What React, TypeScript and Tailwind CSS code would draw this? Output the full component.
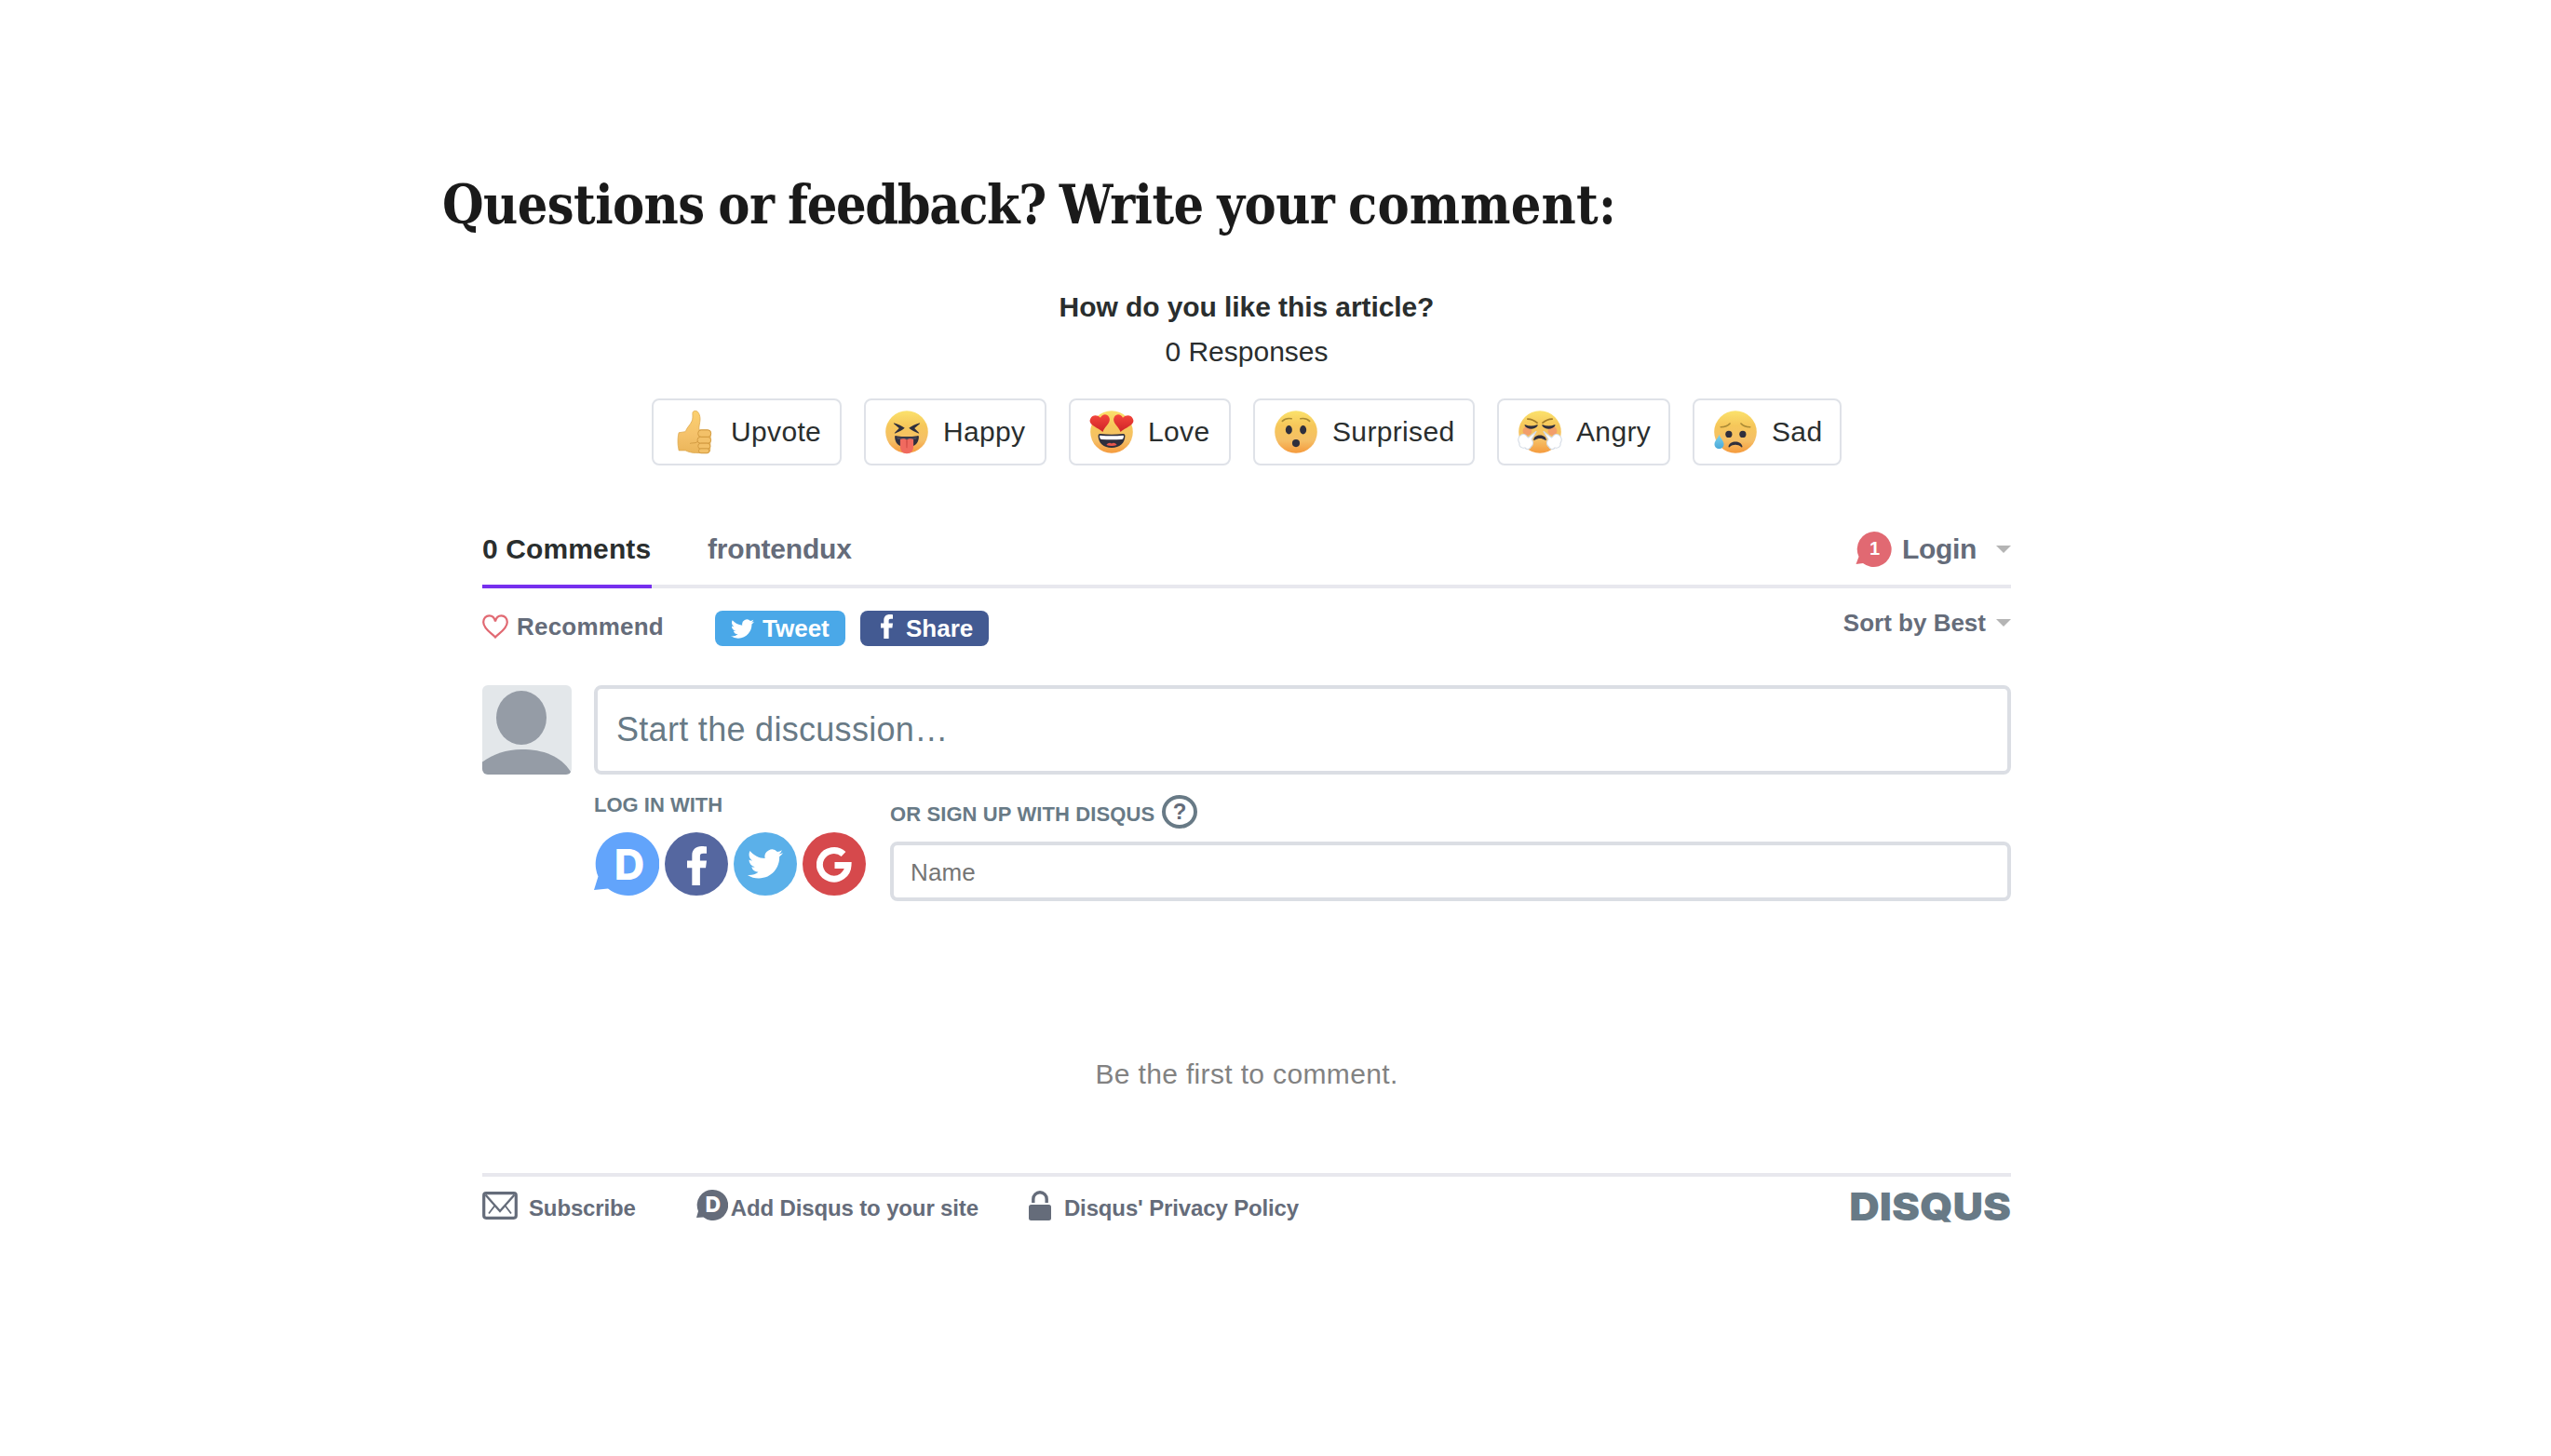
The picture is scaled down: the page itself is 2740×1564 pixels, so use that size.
import type { ReactNode } from "react";

function Face({ id, children }: { id: string; children: ReactNode }) {
  return (
    <svg viewBox="0 0 64 64" className="-ml-0.5 size-12 shrink-0">
      <defs>
        <linearGradient id={id} x1="0" y1="0" x2="0" y2="1">
          <stop offset="0" stopColor="#fbe26c" />
          <stop offset="0.35" stopColor="#f6c75a" />
          <stop offset="0.7" stopColor="#f5bf66" />
          <stop offset="1" stopColor="#f59a3c" />
        </linearGradient>
      </defs>
      <circle cx="32" cy="32" r="30.4" fill={`url(#${id})`} />
      {children}
    </svg>
  );
}

function Thumb() {
  return (
    <svg viewBox="0 0 64 64" className="-ml-0.5 size-12 shrink-0">
      <defs>
        <linearGradient id="thumb" x1="0" y1="0" x2="0" y2="1">
          <stop offset="0" stopColor="#fbd06f" />
          <stop offset="0.55" stopColor="#f5c26b" />
          <stop offset="1" stopColor="#eab55a" />
        </linearGradient>
      </defs>
      <g transform="translate(2 0)">
        <path
          d="M31 1.8c-3 0-4 1.8-3.8 4.4.2 4 .3 7.4-1.2 10.600C23.500 22.500 19 25.500 17 31.500L7.500 33C6 38 5.800 45 6.300 51l1.200 7.500H17c4 2.200 9 3.300 15 3.500l15 .2c4 0 5.600-2 5.300-5.200L53 34c0-3.500-1.500-4.900-5-4.900L36.500 29c-.5-5 1.300-10 1.500-14.500C38.200 8 35.500 1.800 31 1.800z"
          fill="url(#thumb)"
          stroke="#dca84e"
          strokeWidth="1"
        />
        <g fill="#f3c169" stroke="#d29a41" strokeWidth="1.300">
          <rect x="35" y="29.200" width="18.500" height="10" rx="4.500" />
          <rect x="34" y="39.200" width="19.500" height="9" rx="4.500" />
          <rect x="35" y="48.200" width="17.500" height="8" rx="4" />
          <rect x="36" y="55.800" width="15" height="6.500" rx="3.200" />
        </g>
        <path d="M23.500 48.500c5-1.500 8.500.5 11.500-3.500" fill="none" stroke="#d29a41" strokeWidth="1.300" />
      </g>
    </svg>
  );
}

function Happy() {
  return (
    <Face id="happy">
      <g fill="#2f2f3d">
        <path d="M14.200 19.300c5.500 1.700 11 4.300 14.800 7.100-3.800 3.200-8.600 5.900-13.700 7.600-.9.3-1.100-.5-.5-1.100l6.200-6.200-7.500-6.300c-.7-.6-.2-1.400.7-1.100z" />
        <path d="M49.800 19.300c-5.500 1.700-11 4.300-14.800 7.100 3.800 3.200 8.600 5.900 13.700 7.600.9.3 1.100-.5.500-1.100L43 26.700l7.500-6.300c.7-.6.200-1.400-.7-1.100z" />
        <path d="M14.800 39c0-1 .8-1.700 2-1.500 10.400 1.600 20 1.600 30.400 0 1.200-.2 2 .5 2 1.500C49 49 43 53.500 32 53.500S15 49 14.800 39z" />
      </g>
      <path d="M17.500 39c9.500 1.500 19.500 1.500 29 0-.3 3-1 3.600-2.500 3.700-8 .6-16 .6-24 0-1.500-.1-2.200-.7-2.500-3.700z" fill="#454557" />
      <path d="M22.500 42.500c3-1.300 7-1 9.500.8 2.500-1.800 6.500-2.100 9.500-.8V52c0 7-3.500 11-9.500 11s-9.500-4-9.500-11z" fill="#f06a5f" />
      <path d="M31.200 44h1.600l-.3 11h-1z" fill="#c8433f" />
    </Face>
  );
}

function Love() {
  return (
    <Face id="love">
      <defs>
        <linearGradient id="heart" x1="0" y1="0" x2="0" y2="1">
          <stop offset="0" stopColor="#f4473c" />
          <stop offset="1" stopColor="#cf2227" />
        </linearGradient>
      </defs>
      <path d="M28.200 10.500C25.500 5.500 18.500 5.800 16 11.800 11.500 7 4.500 7.500 1.800 12.500c-5 9 9 12.500 17.500 19.500 3-9 13-13.500 8.900-21.500z" fill="url(#heart)" />
      <path d="M35.800 10.500C38.500 5.500 45.500 5.800 48 11.800 52.500 7 59.500 7.500 62.200 12.500c5 9-9 12.500-17.500 19.500-3-9-13-13.500-8.900-21.500z" fill="url(#heart)" />
      <path d="M12.800 37.500c0-2 1.200-2.900 3-2.700 11 1 21.400 1 32.400 0 1.800-.2 3 .7 3 2.700C51 48 43.500 54.500 32 54.500S13 48 12.800 37.500z" fill="#2f2f3d" />
      <path d="M15.500 37c11 1 22 1 33 0 .6 0 .8.500.8 1.200-.3 3.300-1.300 4.300-3 4.400-9.500.7-19 .7-28.600 0-1.700-.1-2.700-1.100-3-4.400 0-.7.200-1.200.8-1.200z" fill="#fff" />
      <path d="M24.500 50.500c2-3 5.500-3.500 7.500-1.800 2-1.700 5.500-1.200 7.500 1.800-4.500 2-10.500 2-15 0z" fill="#e8564c" />
    </Face>
  );
}

function Surprised() {
  return (
    <Face id="surprised">
      <g fill="none" stroke="#a98a35" strokeWidth="2.200" strokeLinecap="round">
        <path d="M12.500 16.500c3-3.200 7.500-4.500 13-3.500" />
        <path d="M51.500 16.500c-3-3.200-7.500-4.500-13-3.500" />
      </g>
      <g fill="#2f2f3d">
        <ellipse cx="21.800" cy="29" rx="4.700" ry="6.200" />
        <ellipse cx="42.200" cy="29" rx="4.700" ry="6.200" />
        <ellipse cx="32" cy="48" rx="5.400" ry="5.500" />
      </g>
    </Face>
  );
}

function Angry() {
  return (
    <Face id="angry">
      <circle cx="14" cy="30.500" r="6.500" fill="#f08a70" opacity=".65" />
      <circle cx="50" cy="30.500" r="6.500" fill="#f08a70" opacity=".65" />
      <g fill="none" stroke="#a27c2b" strokeWidth="2.400" strokeLinecap="round">
        <path d="M14.500 13.500c5 .2 10 2.300 13.500 5.300" />
        <path d="M49.500 13.500c-5 .2-10 2.300-13.500 5.300" />
      </g>
      <g fill="#2f2f3d">
        <path d="M11 21.500c5.500 2.500 11.500 2.500 17 0 1 0 1.200.8.800 1.500-3.300 6-15.300 6-18.600 0-.4-.7-.2-1.500.8-1.500z" />
        <path d="M36 21.500c5.500 2.500 11.500 2.500 17 0 1 0 1.200.8.800 1.500-3.300 6-15.300 6-18.600 0-.4-.7-.2-1.500.8-1.500z" />
        <path d="M23 43c1-8.500 17-8.500 18 0 .1 1-.7 1.200-1.500.7-5-3.200-10-3.200-15 0-.8.500-1.600.3-1.500-.7z" />
      </g>
      <g fill="#fff" stroke="#d3dae4" strokeWidth="1.400">
        <path d="M3 38c3-4 8.500-3.500 10.500.5l2 1.500L27 31l-7 11.500c3 3.500 2.500 8.500-.7 10.500C18 57 13 58 10.500 54.500 6 56 1.500 52.500 2.800 48.500.5 45 .5 41 3 38z" />
        <path d="M61 38c-3-4-8.500-3.500-10.500.5l-2 1.500L37 31l7 11.500c-3 3.500-2.500 8.500.7 10.500C46 57 51 58 53.500 54.500 58 56 62.500 52.500 61.200 48.500 63.500 45 63.500 41 61 38z" />
      </g>
    </Face>
  );
}

function Sad() {
  return (
    <Face id="sad">
      <defs>
        <linearGradient id="tear" x1="0" y1="0" x2="0" y2="1">
          <stop offset="0" stopColor="#7cd3f0" />
          <stop offset="1" stopColor="#4ba9d8" />
        </linearGradient>
      </defs>
      <g fill="none" stroke="#a98a35" strokeWidth="2.200" strokeLinecap="round">
        <path d="M11 25c5 0 10-1.500 13-5" />
        <path d="M53 25c-5 0-10-1.500-13-5" />
      </g>
      <g fill="#2f2f3d">
        <circle cx="22.500" cy="35.200" r="4.800" />
        <circle cx="42.500" cy="35.200" r="4.800" />
        <path d="M22 53c1.500-9.500 18.500-9.500 20 0 .1.900-.8 1.200-1.600.6-5.300-4.200-11.500-4.200-16.800 0-.8.600-1.700.3-1.600-.6z" />
      </g>
      <path d="M8.800 35.500C7.500 41 2 44 2 49.500 2 53 5 56 8.700 56s6.700-3 6.700-6.500c0-5.500-5.300-8.500-6.600-14z" fill="url(#tear)" />
    </Face>
  );
}

const BIRD =
  "M23.954 4.569a10 10 0 0 1-2.825.775 4.958 4.958 0 0 0 2.163-2.723c-.951.555-2.005.959-3.127 1.184a4.920 4.920 0 0 0-8.384 4.482C7.691 8.094 4.066 6.130 1.640 3.161a4.822 4.822 0 0 0-.666 2.475c0 1.710.870 3.213 2.188 4.096a4.904 4.904 0 0 1-2.228-.616v.061a4.923 4.923 0 0 0 3.946 4.827 4.996 4.996 0 0 1-2.212.085 4.937 4.937 0 0 0 4.604 3.417 9.868 9.868 0 0 1-6.102 2.105c-.390 0-.779-.023-1.170-.067a13.995 13.995 0 0 0 7.557 2.209c9.054 0 13.999-7.496 13.999-13.986 0-.209 0-.420-.015-.630a9.936 9.936 0 0 0 2.460-2.548z";
const F_MARK = "M8.600 26V14.400h3.800l.6-4.800H8.600V6.800c0-1.300.4-2 2.200-2H13V.3C12.600.2 11.200 0 9.500 0 6 0 3.300 2.100 3.300 6.100v3.500H0v4.800h3.300V26z";

function Bird({ className }: { className: string }) {
  return (
    <svg viewBox="0 2 24 20" className={className} fill="#fff">
      <path d={BIRD} />
    </svg>
  );
}

function FMark({ className }: { className: string }) {
  return (
    <svg viewBox="0 0 13 26" className={className} fill="#fff">
      <path d={F_MARK} />
    </svg>
  );
}

function Caret() {
  return <span className="h-0 w-0 border-x-[8px] border-t-[8px] border-x-transparent border-t-[#b4b4b4]" />;
}

const reactions = [
  { label: "Upvote", icon: <Thumb />, width: "w-[204px]" },
  { label: "Happy", icon: <Happy />, width: "w-[196px]" },
  { label: "Love", icon: <Love />, width: "w-[174px]" },
  { label: "Surprised", icon: <Surprised />, width: "w-[238px]" },
  { label: "Angry", icon: <Angry />, width: "w-[186px]" },
  { label: "Sad", icon: <Sad />, width: "w-[160px]" },
];

function Reactions() {
  return (
    <section className="flex flex-col items-center text-[30px] leading-10 text-[#2a2e2e]">
      <h2 className="font-bold tracking-[-0.08px]">How do you like this article?</h2>
      <p className="mt-2">0 Responses</p>
      <div className="mt-[30px] flex gap-6">
        {reactions.map((r) => (
          <button key={r.label} className={`flex h-[72px] items-center gap-[15px] rounded-lg border-2 border-[#dfe2e8] pl-[22px] ${r.width}`}>
            {r.icon}
            <span className="tracking-[0.35px]">{r.label}</span>
          </button>
        ))}
      </div>
    </section>
  );
}

function Tabs() {
  return (
    <nav className="flex h-[81px] border-b-4 border-[#e8e8ee] text-[30px] font-bold text-[#656c7a]">
      <div className="-mb-1 flex w-[182px] items-center whitespace-nowrap border-b-4 border-[#762fee] tracking-[0.12px] text-[#2a2e2e]">
        0 Comments
      </div>
      <div className="ml-[60px] flex items-center tracking-[-0.2px]">frontendux</div>
      <div className="ml-auto flex items-center">
        <span className="relative mr-[11px] flex h-10 w-[39px] items-center justify-center pl-1">
          <svg viewBox="0 0 39 40" className="absolute inset-0 h-10 w-[39px]" fill="#e16972">
            <path d="M20 1a19 19 0 1 1-12 34L.5 36l3-8A19 19 0 0 1 20 1z" />
          </svg>
          <span className="relative -mt-0.5 -ml-0.5 text-[20px] leading-none text-white">1</span>
        </span>
        <span className="tracking-[-0.35px]">Login</span>
        <span className="ml-[21px] flex">
          <Caret />
        </span>
      </div>
    </nav>
  );
}

function Actions() {
  return (
    <div className="flex h-[104px] items-start text-[26px] font-bold leading-8 text-[#656c7a]">
      <div className="mt-[25px] flex items-center">
        <svg viewBox="0 0 28 26" className="h-[26px] w-7" fill="none" stroke="#e16972" strokeWidth="2.200">
          <path d="M14 24.500C10.500 20.500 1.200 15.500 1.200 8.200 1.200 4.200 4 1.300 7.500 1.300c3.300 0 5.700 2.400 6.500 6.200.8-3.800 3.200-6.200 6.500-6.200 3.500 0 6.300 2.900 6.300 6.900 0 7.300-9.300 12.300-12.800 16.300z" />
        </svg>
        <span className="ml-[9px] w-[158px] tracking-[0.2px]">Recommend</span>
      </div>
      <button className="ml-[55px] mt-6 flex h-[38px] w-[140px] items-center rounded-lg bg-[#4aa8e8] pl-[17px] text-white">
        <Bird className="h-[21px] w-[25px]" />
        <span className="ml-[9px]">Tweet</span>
      </button>
      <button className="ml-4 mt-6 flex h-[38px] w-[138px] items-center rounded-lg bg-[#435a92] pl-[22px] text-white">
        <FMark className="-mt-1 h-[26px] w-[13px]" />
        <span className="ml-[14px]">Share</span>
      </button>
      <div className="ml-auto mt-[21px] flex items-center">
        <span>Sort by Best</span>
        <span className="ml-[11px] flex">
          <Caret />
        </span>
      </div>
    </div>
  );
}

function LoginIcons() {
  return (
    <div className="mt-2 flex h-[68px] gap-1.5">
      <span className="relative flex w-[70px] items-center justify-center pl-1.5">
        <svg viewBox="0 0 70 68" className="absolute inset-0 h-[68px] w-[70px]" fill="#62a4fb">
          <path d="M36 0a34 34 0 1 1-21 60.500L0 62l4.500-14.500A34 34 0 0 1 36 0z" />
        </svg>
        <span className="relative font-['Inter'] text-[45px] font-extrabold leading-none text-white">D</span>
      </span>
      <span className="flex w-[68px] items-center justify-center rounded-full bg-[#5567a0]">
        <FMark className="mt-1 h-[42px] w-[21px]" />
      </span>
      <span className="flex w-[68px] items-center justify-center rounded-full bg-[#5bb0e9]">
        <Bird className="h-8 w-[38px]" />
      </span>
      <span className="flex w-[68px] items-center justify-center rounded-full bg-[#d6494c]">
        <svg viewBox="0 0 38 40" className="h-10 w-[38px]" fill="none" stroke="#fff" strokeWidth="7">
          <path d="M29 9.500A15.300 15.300 0 1 0 34 21.500H19.500" />
        </svg>
      </span>
    </div>
  );
}

function Composer() {
  return (
    <div className="flex">
      <svg viewBox="0 0 96 96" className="size-24 rounded-md">
        <rect width="96" height="96" fill="#e3e7ea" />
        <ellipse cx="42" cy="35" rx="27" ry="29" fill="#959ca6" />
        <path d="M0 82.500C12 74 26 69 42 69c24 0 42 7 53 24v3H0z" fill="#959ca6" />
      </svg>
      <div className="ml-6 w-[1522px]">
        <div className="flex h-24 items-center rounded-lg border-4 border-[#dbdee4] pl-[20px] text-[36px] tracking-[0.3px] text-[#687a86]">
          Start the discussion…
        </div>
        <div className="flex text-[22px] font-bold text-[#687a86]">
          <div className="w-[318px] pt-[18px]">
            <div className="h-9 pt-0.5 leading-[25px]">LOG IN WITH</div>
            <LoginIcons />
          </div>
          <div className="flex-1 pt-[21px]">
            <div className="flex h-[38px] items-center">
              <span className="w-[285px] whitespace-nowrap pt-1 tracking-[0.1px]">OR SIGN UP WITH DISQUS</span>
              <span className="ml-[7px] flex h-9 w-[38px] items-center justify-center rounded-[50%] border-4 border-[#687a86] text-[24px] leading-none text-[#656c7a]">?</span>
            </div>
            <div className="mt-[13px] flex h-16 items-center rounded-lg border-4 border-[#dbdee4] pl-[18px] pt-0.5 text-[26px] font-normal tracking-[0.1px] text-[#757575]">
              Name
            </div>
          </div>
        </div>
      </div>
    </div>
  );
}

function Footer() {
  return (
    <footer className="flex h-[71px] items-center border-t-4 border-[#e8e8ee] text-[24px] font-bold tracking-[-0.14px] text-[#656c7a]">
      <svg viewBox="0 0 38 30" className="-mt-1.5 h-[30px] w-[38px]" fill="none" stroke="#656c7a">
        <rect x="1.700" y="1.700" width="34.600" height="26.600" rx="2.500" strokeWidth="3.200" />
        <path d="M3.500 3.500 19 21 34.500 3.500" strokeWidth="2.400" />
        <path d="M13.500 15 7 23.500M24.500 15 31 23.500" strokeWidth="1.800" />
      </svg>
      <span className="ml-3">Subscribe</span>
      <span className="relative -mt-1.5 ml-[65px] flex h-[33px] w-[34px] items-center justify-center pl-0.5">
        <svg viewBox="0 0 34 33" className="absolute inset-0 h-[33px] w-[34px]" fill="#656c7a">
          <path d="M17.500 0a16.500 16.500 0 1 1-10 29.500L0 30l2-7A16.500 16.500 0 0 1 17.500 0z" />
        </svg>
        <span className="relative font-['Inter'] text-[23px] font-extrabold leading-none text-white">D</span>
      </span>
      <span className="ml-[3px]">Add Disqus to your site</span>
      <svg viewBox="0 0 24 32" className="-mt-1.5 ml-[54px] h-8 w-6">
        <rect y="15" width="24" height="17" rx="2.500" fill="#656c7a" />
        <path d="M4.800 13V9a7.200 7.200 0 0 1 14.400 0v4" fill="none" stroke="#656c7a" strokeWidth="3.400" />
      </svg>
      <span className="ml-[14px]">Disqus' Privacy Policy</span>
      <span className="-mt-0.5 ml-auto origin-right scale-x-[1.1] font-['Inter'] text-[41px] font-black leading-none tracking-normal text-[#687a86]">
        DISQUS
      </span>
    </footer>
  );
}

export default function App() {
  return (
    <main className="h-[1564px] w-[2740px] overflow-hidden bg-white font-['Liberation_Sans',sans-serif]">
      <h1 className="ml-[475px] h-[310px] whitespace-nowrap pt-[180px] font-['DejaVu_Serif_Condensed','DejaVu_Serif',serif] text-[57px] font-bold leading-[80px] tracking-[-0.6px] text-[#1a1a1a] [font-stretch:condensed] [word-spacing:-2.5px]">
        Questions or <span className="tracking-[-1.35px]">feedback?</span> Write your{" "}
        <span className="tracking-[0.2px]">comment:</span>
      </h1>
      <div className="ml-[518px] w-[1642px]">
        <Reactions />
        <div className="mt-[51px]">
          <Tabs />
        </div>
        <Actions />
        <Composer />
        <p className="mt-[166px] text-center text-[30px] leading-10 tracking-[0.35px] text-[#828282]">Be the first to comment.</p>
        <div className="mt-[86px]">
          <Footer />
        </div>
      </div>
    </main>
  );
}
